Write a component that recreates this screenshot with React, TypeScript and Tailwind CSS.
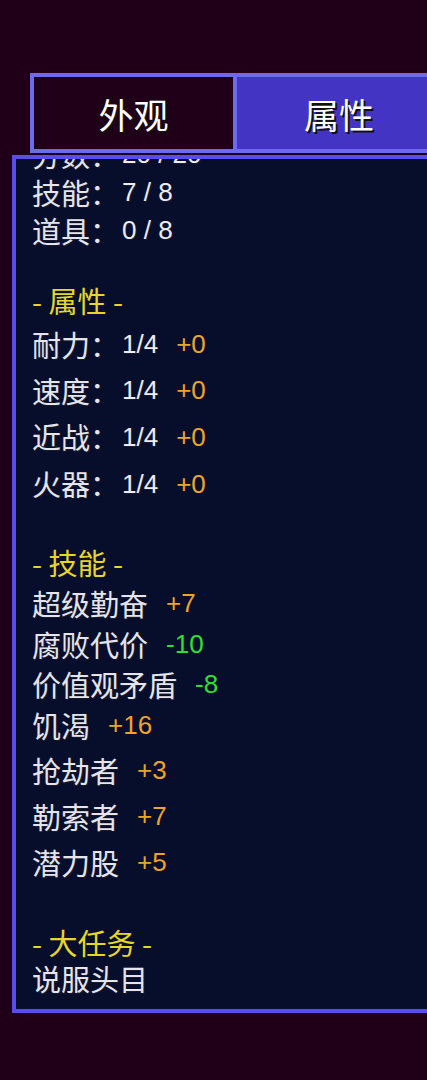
import React from 'react';

const cjk = { fontFamily: '"Noto Sans CJK SC", "Noto Sans", sans-serif' };
const num = { fontFamily: '"Liberation Sans", Arial, sans-serif' };

type Tone = 'up' | 'down';

interface StatRowProps {
  label: string;
  value?: string;
  delta?: string;
  tone?: Tone;
  h: string;
}

const StatRow: React.FC<StatRowProps> = ({ label, value, delta, tone = 'up', h }) => (
  <div className={`flex items-center ${h}`}>
    <span className="text-[29px] leading-none text-[#e4e4ec] [text-shadow:1px_1px_0_#1a1a2a]" style={cjk}>
      {label}
    </span>
    {value && (
      <span className="ml-[3px] text-[26px] leading-none text-[#ececf2] [text-shadow:1px_1px_0_#1a1a2a]" style={num}>
        {value}
      </span>
    )}
    {delta && (
      <span
        className={`ml-[18px] text-[26px] leading-none ${
          tone === 'up' ? 'text-[#eca42a]' : 'text-[#2ee02e]'
        }`}
        style={num}
      >
        {delta}
      </span>
    )}
  </div>
);

const Heading: React.FC<{ title: string; h: string }> = ({ title, h }) => (
  <div className={`flex items-center ${h}`}>
    <span className="text-[29px] leading-none text-[#e6d62a]" style={cjk}>
      - {title} -
    </span>
  </div>
);

export default function App() {
  return (
    <div className="w-[427px] h-[1080px] overflow-hidden bg-[#200018]">
      {/* tab strip */}
      <div className="ml-[30px] mt-[73px] flex w-[418px] h-[80px] border-4 border-[#6d6af0]">
        <div className="flex w-[199px] items-center justify-center bg-[#200018]">
          <span className="text-[35px] leading-none text-white [text-shadow:2px_2px_0_#111]" style={cjk}>
            外观
          </span>
        </div>
        <div className="w-[4px] bg-[#6d6af0]" />
        <div className="flex w-[204px] items-center justify-center bg-[#4434c4]">
          <span className="text-[35px] leading-none text-white [text-shadow:2px_2px_0_#111]" style={cjk}>
            属性
          </span>
        </div>
      </div>

      {/* attribute panel */}
      <div className="ml-[12px] mt-[2px] w-[440px] h-[858px] overflow-hidden border-4 border-[#5a4eea] bg-[#060e2c]">
        <div className="-mt-[24px] pl-[16px]">
          <StatRow label="分数：" value="20 / 20" h="h-[38px]" />
          <StatRow label="技能：" value="7 / 8" h="h-[38px]" />
          <StatRow label="道具：" value="0 / 8" h="h-[38px]" />
          <div className="h-[30px]" />

          <Heading title="属性" h="h-[42px]" />
          <StatRow label="耐力：" value="1/4" delta="+0" h="h-[46px]" />
          <StatRow label="速度：" value="1/4" delta="+0" h="h-[46px]" />
          <StatRow label="近战：" value="1/4" delta="+0" h="h-[47px]" />
          <StatRow label="火器：" value="1/4" delta="+0" h="h-[47px]" />
          <div className="h-[34px]" />

          <Heading title="技能" h="h-[42px]" />
          <StatRow label="超级勤奋" delta="+7" h="h-[40px]" />
          <StatRow label="腐败代价" delta="-10" tone="down" h="h-[42px]" />
          <StatRow label="价值观矛盾" delta="-8" tone="down" h="h-[38px]" />
          <StatRow label="饥渴" delta="+16" h="h-[44px]" />
          <StatRow label="抢劫者" delta="+3" h="h-[46px]" />
          <StatRow label="勒索者" delta="+7" h="h-[46px]" />
          <StatRow label="潜力股" delta="+5" h="h-[46px]" />
          <div className="h-[38px]" />

          <Heading title="大任务" h="h-[38px]" />
          <StatRow label="说服头目" h="h-[34px]" />
        </div>
      </div>
    </div>
  );
}
